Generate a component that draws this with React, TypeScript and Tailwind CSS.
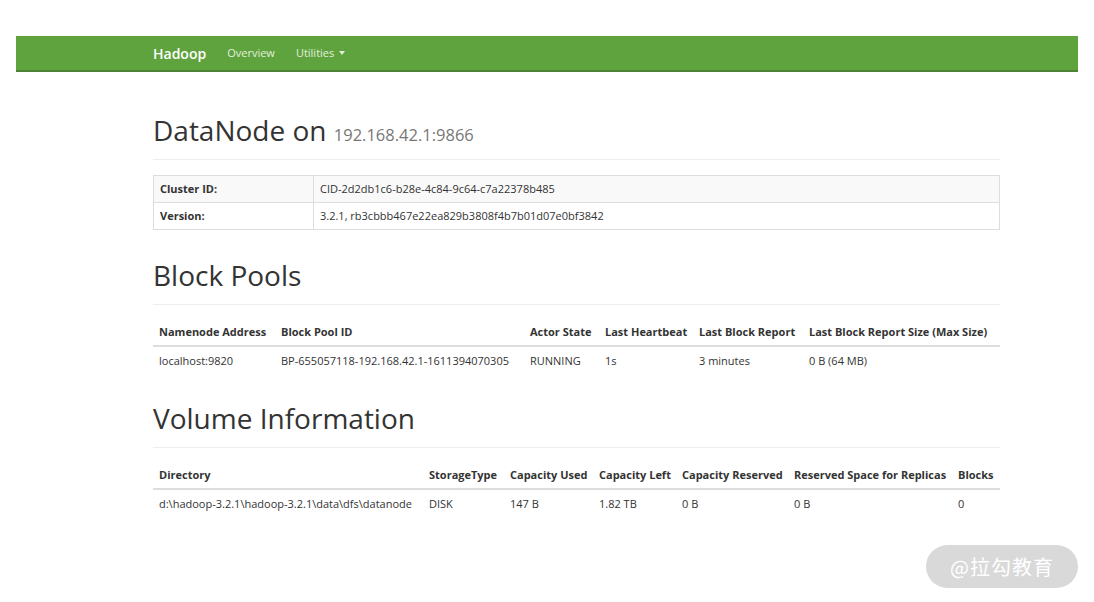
import * as React from "react"

type Column = { label: string; width: string }

const poolColumns: Column[] = [
  { label: "Namenode Address", width: "w-[122px]" },
  { label: "Block Pool ID", width: "w-[249px]" },
  { label: "Actor State", width: "w-[75px]" },
  { label: "Last Heartbeat", width: "w-[94px]" },
  { label: "Last Block Report", width: "w-[110px]" },
  { label: "Last Block Report Size (Max Size)", width: "w-[197px]" },
]

const poolRows = [
  ["localhost:9820", "BP-655057118-192.168.42.1-1611394070305", "RUNNING", "1s", "3 minutes", "0 B (64 MB)"],
]

const volumeColumns: Column[] = [
  { label: "Directory", width: "w-[270px]" },
  { label: "StorageType", width: "w-[81px]" },
  { label: "Capacity Used", width: "w-[89px]" },
  { label: "Capacity Left", width: "w-[83px]" },
  { label: "Capacity Reserved", width: "w-[112px]" },
  { label: "Reserved Space for Replicas", width: "w-[164px]" },
  { label: "Blocks", width: "w-[48px]" },
]

const volumeRows = [
  ["d:\\hadoop-3.2.1\\hadoop-3.2.1\\data\\dfs\\datanode", "DISK", "147 B", "1.82 TB", "0 B", "0 B", "0"],
]

function PageHeading({ children, className }: { children: React.ReactNode; className: string }) {
  return (
    <div className={className}>
      <h1 className="h-[31px] text-[28px] leading-[31px] font-normal text-[#333]">{children}</h1>
      <div className="mt-[13px] h-px bg-[#eee]" />
    </div>
  )
}

function DataTable({ columns, rows }: { columns: Column[]; rows: string[][] }) {
  return (
    <table className="mt-[13px] w-[847px] table-fixed border-collapse text-[11px] leading-[17px] text-[#333]">
      <colgroup>
        {columns.map((c) => (
          <col key={c.label} className={c.width} />
        ))}
      </colgroup>
      <thead>
        <tr className="border-b-2 border-[#ddd]">
          {columns.map((c) => (
            <th key={c.label} className="whitespace-nowrap px-[6px] py-[5px] text-left font-bold">
              {c.label}
            </th>
          ))}
        </tr>
      </thead>
      <tbody>
        {rows.map((row, i) => (
          <tr key={i}>
            {row.map((cell, j) => (
              <td key={j} className="whitespace-nowrap px-[6px] py-[5px]">
                {cell}
              </td>
            ))}
          </tr>
        ))}
      </tbody>
    </table>
  )
}

export default function App() {
  return (
    <div className="relative h-[602px] w-[1094px] overflow-hidden bg-white pt-[36px] font-['Open_Sans',sans-serif]">
      <nav className="mx-[16px] flex h-[36px] items-center gap-[21px] border-b-2 border-[#4e8237] bg-[#5fa33f] pl-[137px]">
        <span className="text-[14px] font-semibold text-white">Hadoop</span>
        <span className="text-[11px] text-[#e3efdc]">Overview</span>
        <span className="flex items-center gap-[5px] text-[11px] text-[#e3efdc]">
          Utilities
          <span className="inline-block h-0 w-0 border-x-[3px] border-t-[4px] border-x-transparent border-t-[#e3efdc]" />
        </span>
      </nav>

      <main className="ml-[153px] w-[847px]">
        <PageHeading className="mt-[43px]">
          DataNode on <span className="text-[16.5px] leading-none text-[#777]">192.168.42.1:9866</span>
        </PageHeading>

        <table className="mt-[15px] w-[847px] table-fixed border-collapse border border-[#ddd] text-[11px] leading-[16px] text-[#333]">
          <colgroup>
            <col className="w-[160px]" />
            <col />
          </colgroup>
          <tbody>
            <tr className="bg-[#f9f9f9]">
              <th className="border border-[#ddd] px-[6px] py-[5px] text-left font-bold">Cluster ID:</th>
              <td className="border border-[#ddd] px-[6px] py-[5px]">CID-2d2db1c6-b28e-4c84-9c64-c7a22378b485</td>
            </tr>
            <tr>
              <th className="border border-[#ddd] px-[6px] py-[5px] text-left font-bold">Version:</th>
              <td className="border border-[#ddd] px-[6px] py-[5px]">3.2.1, rb3cbbb467e22ea829b3808f4b7b01d07e0bf3842</td>
            </tr>
          </tbody>
        </table>

        <PageHeading className="mt-[30px]">Block Pools</PageHeading>
        <DataTable columns={poolColumns} rows={poolRows} />

        <PageHeading className="mt-[29px]">Volume Information</PageHeading>
        <DataTable columns={volumeColumns} rows={volumeRows} />
      </main>

      <div className="absolute left-[926px] top-[545px] flex h-[43px] w-[152px] items-center justify-center rounded-full bg-[#d9d9d9] font-['Noto_Sans_CJK_SC',sans-serif] text-[20px] tracking-[1px] text-white">
        @拉勾教育
      </div>
    </div>
  )
}
